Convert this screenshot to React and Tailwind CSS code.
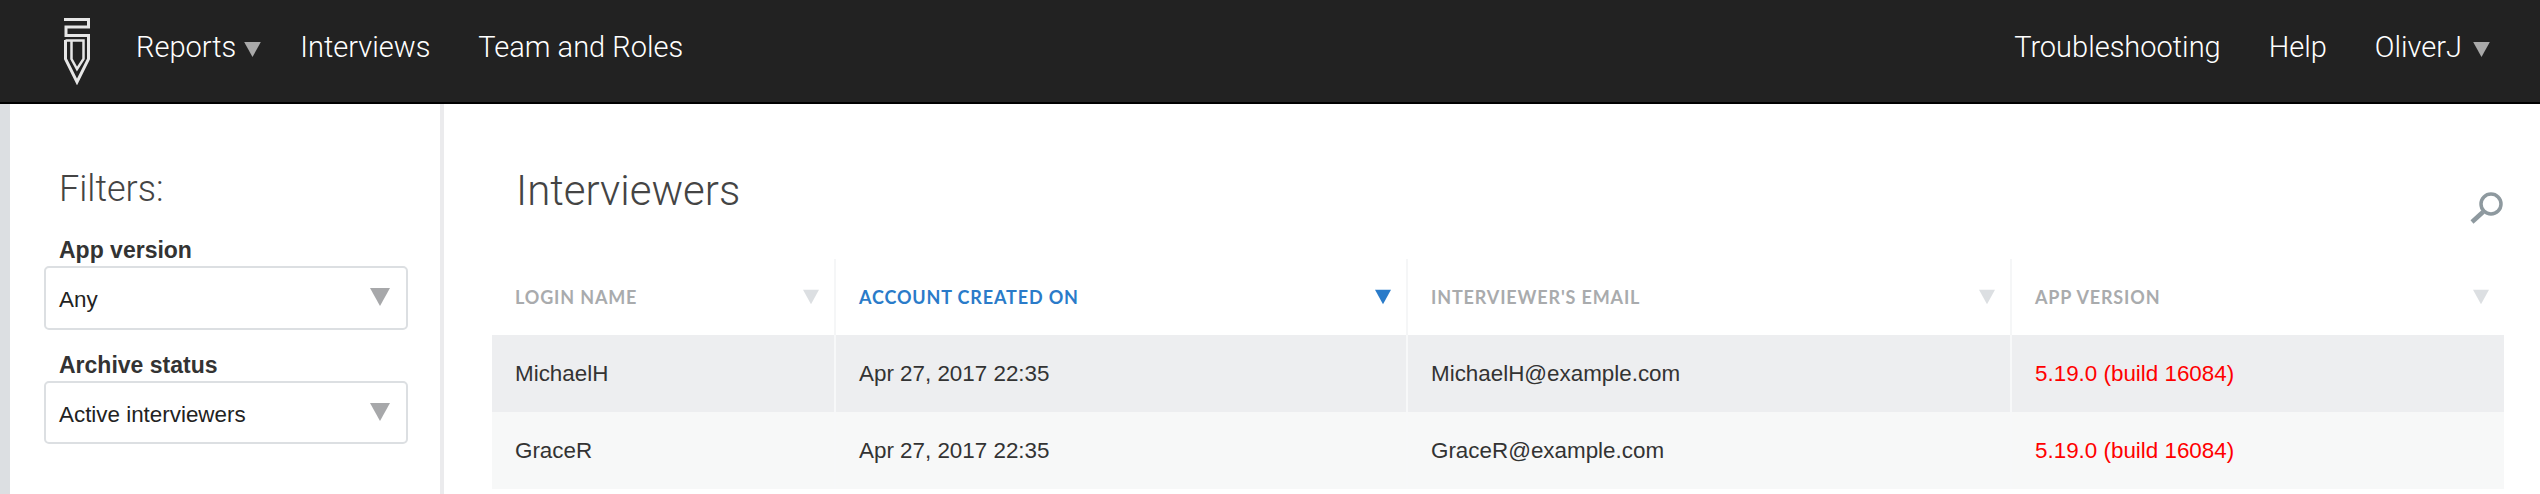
const Tri = ({ className }) => (
  <svg className={className} viewBox="0 0 20 18"><path d="M0 0H20L10 18Z" fill="currentColor" /></svg>
);

const Logo = () => (
  <svg width="26" height="68" viewBox="0 0 26 68" fill="none" stroke="#e6e6e6" strokeWidth="3" className="shrink-0">
    <path d="M0 2.5H24.5V10H2V18.5H24.5V42L13 65L1.5 42V23" />
    <path d="M1.5 23.5H19.5V42L13 52L7.5 42V23.5" strokeWidth="2.5" />
  </svg>
);

const Search = () => (
  <svg width="34" height="32" viewBox="0 0 34 32" fill="none" stroke="#8e999f" className="block">
    <circle cx="21" cy="12" r="10" strokeWidth="3.5" />
    <path d="M13 20L2 30" strokeWidth="4.5" />
  </svg>
);

const Select = ({ label, value, className, boxClass }) => (
  <div className={className}>
    <div className="pl-[15px] h-[30px] leading-[28px] text-[23px] font-bold text-[#333] font-['Liberation_Sans',sans-serif]">{label}</div>
    <div className={`flex items-center justify-between w-[364px] rounded-[5px] border-2 border-[#dcdfe2] pl-[13px] pr-[16px] bg-white ${boxClass}`}>
      <span className="text-[22.4px] text-[#222] mt-[4px] font-['Liberation_Sans',sans-serif]">{value}</span>
      <Tri className="w-[20px] h-[18px] text-[#a7a8aa] mb-[2px]" />
    </div>
  </div>
);

const thBase = "h-[76px] align-middle p-0 border-r-[2px] border-[#f5f6f7] last:border-r-0";
const tdBase = "h-[77px] pl-[23px] text-[22.4px] text-[#333] border-r-[2px] border-[#f7f8f9] last:border-r-0 font-['Liberation_Sans',sans-serif]";

const Th = ({ children, active }) => (
  <th className={thBase}>
    <div className="flex items-center justify-between pl-[23px] pr-[15px]">
      <span className={`text-[18px] font-bold tracking-[0.85px] uppercase font-['Lato',sans-serif] ${active ? "text-[#2a7bc9]" : "text-[#a9abad]"}`}>{children}</span>
      <Tri className={`w-[16px] h-[20px] ${active ? "text-[#2a7bc9]" : "text-[#dcdfe2]"}`} />
    </div>
  </th>
);

const rows = [
  { name: "MichaelH", bg: "bg-[#edeef0]" },
  { name: "GraceR", bg: "bg-[#f7f8f8]" },
];

export default function App() {
  return (
    <div className="w-[2540px] h-[494px] overflow-hidden bg-white flex flex-col font-['Roboto',sans-serif]">
      <header className="h-[104px] shrink-0 bg-[#222222] border-b-[2px] border-black flex items-center justify-between text-white text-[29px] font-light">
        <nav className="flex items-center pl-[64px]">
          <Logo />
          <span className="ml-[46px] mb-[6px] flex items-center">Reports<Tri className="w-[17px] h-[15px] ml-[8px] mt-[3px] text-[#a9a9a9]" /></span>
          <span className="ml-[39px] mb-[6px]">Interviews</span>
          <span className="ml-[48px] mb-[6px]">Team and Roles</span>
        </nav>
        <nav className="flex items-center pr-[24px] mr-[26px]">
          <span className="mb-[6px]">Troubleshooting</span>
          <span className="ml-[48px] mb-[6px]">Help</span>
          <span className="ml-[48px] mb-[6px] flex items-center">OliverJ<Tri className="w-[17px] h-[15px] ml-[11px] mt-[3px] text-[#a9a9a9]" /></span>
        </nav>
      </header>
      <div className="flex flex-1 min-h-0">
        <div className="w-[10px] shrink-0 bg-[#dcdfe2]" />
        <aside className="w-[434px] shrink-0 border-r-[4px] border-[#ebebed] pl-[34px] pt-[61px]">
          <h2 className="pl-[15px] text-[36px] leading-[48px] font-light text-[#444]">Filters:</h2>
          <Select label="App version" value="Any" className="mt-[23px]" boxClass="h-[64px]" />
          <Select label="Archive status" value="Active interviewers" className="mt-[21px]" boxClass="h-[63px]" />
        </aside>
        <main className="flex-1 pl-[48px] pr-[36px] min-w-0">
          <div className="flex justify-between h-[155px]">
            <h1 className="pl-[24px] pt-[61px] text-[42px] leading-[52px] font-light text-[#444]">Interviewers</h1>
            <div className="pt-[88px]"><Search /></div>
          </div>
          <table className="w-[2012px] table-fixed border-collapse">
            <colgroup>
              <col className="w-[343px]" />
              <col className="w-[572px]" />
              <col className="w-[604px]" />
              <col className="w-[493px]" />
            </colgroup>
            <thead>
              <tr>
                <Th>Login name</Th>
                <Th active>Account created on</Th>
                <Th>Interviewer's email</Th>
                <Th>App version</Th>
              </tr>
            </thead>
            <tbody>
              {rows.map((r) => (
                <tr key={r.name} className={r.bg}>
                  <td className={tdBase}>{r.name}</td>
                  <td className={tdBase}>Apr 27, 2017 22:35</td>
                  <td className={tdBase}>{r.name}@example.com</td>
                  <td className={`${tdBase} !text-[#ff0000]`}>5.19.0 (build 16084)</td>
                </tr>
              ))}
            </tbody>
          </table>
        </main>
      </div>
    </div>
  );
}
